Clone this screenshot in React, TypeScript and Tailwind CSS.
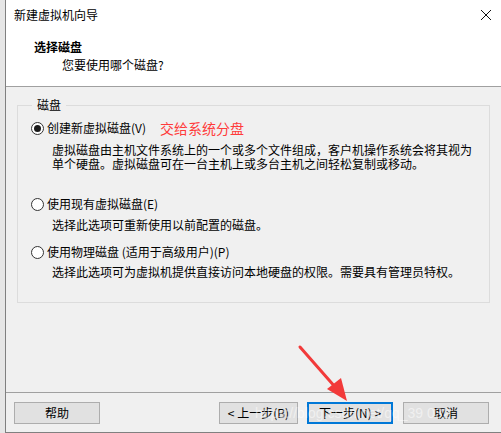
import React from "react"

function Radio({ checked }: { checked?: boolean }) {
  return (
    <span className="flex h-[13px] w-[13px] shrink-0 items-center justify-center rounded-full border border-[#333333] bg-white">
      {checked && <span className="h-[7px] w-[7px] rounded-full bg-[#1a1a1a]" />}
    </span>
  )
}

function Btn({ label, w, primary }: { label: string; w: string; primary?: boolean }) {
  return (
    <button
      className={`flex h-[22px] items-center justify-center bg-[#e1e1e1] text-[12px] text-black ${w} ${
        primary ? "border-2 border-[#0078d7]" : "border border-[#adadad]"
      }`}
    >
      {label}
    </button>
  )
}

export default function App() {
  return (
    <div
      className="relative h-[433px] w-[501px] overflow-hidden bg-[#e6e6e6] pl-[5px]"
      style={{ fontFamily: '"Noto Sans CJK SC", "Noto Sans", sans-serif' }}
    >
      <div className="flex h-full flex-col border-l border-b border-[#808080] bg-[#f0f0f0]">
        {/* Title bar */}
        <div className="flex h-[30px] items-center justify-between bg-white pl-[8px] pr-[8px] text-[12px] text-black">
          <span>新建虚拟机向导</span>
          <svg width="12" height="12" viewBox="0 0 12 12" className="mr-[1px]">
            <path d="M1 1 L11 11 M11 1 L1 11" stroke="#111" strokeWidth="1" />
          </svg>
        </div>

        {/* Header */}
        <div className="h-[57px] border-b border-[#a0a0a0] bg-white text-[12px] leading-[16px] text-black">
          <div className="pl-[28px] pt-[9px] font-bold">选择磁盘</div>
          <div className="pl-[56px] pt-[2px]">您要使用哪个磁盘?</div>
        </div>

        {/* Body */}
        <div className="flex-1 px-[11px] pt-[10px]">
          <fieldset className="border border-[#dcdcdc] pb-[23px] pl-[13px] pr-[10px] text-[12px] leading-[16px] text-black">
            <legend className="ml-[1px] px-[5px]">磁盘</legend>

            <div className="mt-[7px] flex items-center gap-[3px]">
              <Radio checked />
              <span>创建新虚拟磁盘(V)</span>
              <span className="ml-[11px] text-[14px] text-[#ff3b3b]">交给系统分盘</span>
            </div>
            <div className="mt-[7px] pl-[21px] leading-[14px]">
              虚拟磁盘由主机文件系统上的一个或多个文件组成，客户机操作系统会将其视为
              <br />
              单个硬盘。虚拟磁盘可在一台主机上或多台主机之间轻松复制或移动。
            </div>

            <div className="mt-[25px] flex items-center gap-[3px]">
              <Radio />
              <span>使用现有虚拟磁盘(E)</span>
            </div>
            <div className="mt-[6px] pl-[21px] leading-[14px]">选择此选项可重新使用以前配置的磁盘。</div>

            <div className="mt-[12px] flex items-center gap-[3px]">
              <Radio />
              <span>使用物理磁盘 (适用于高级用户)(P)</span>
            </div>
            <div className="mt-[5px] pl-[21px] leading-[14px]">
              选择此选项可为虚拟机提供直接访问本地硬盘的权限。需要具有管理员特权。
            </div>
          </fieldset>
        </div>

        {/* Footer */}
        <div className="flex h-[40px] items-start border-t border-[#a0a0a0] pt-[9px] pl-[8px]">
          <Btn label="帮助" w="w-[86px]" />
          <div className="ml-[119px] flex gap-[10px]">
            <Btn label="< 上一步(B)" w="w-[79px]" />
            <div className="-ml-[1px] flex gap-[10px]">
              <Btn label="下一步(N) >" w="w-[86px]" primary />
              <Btn label="取消" w="w-[86px]" />
            </div>
          </div>
        </div>
      </div>

      {/* watermark */}
      <div
        className="pointer-events-none absolute left-[255px] top-[403px] whitespace-nowrap text-[14px] text-white/50"
        style={{ fontFamily: '"Liberation Sans", sans-serif' }}
      >
        https://blog.csdn.net/qq_39 032
      </div>

      {/* annotation arrow */}
      <svg className="pointer-events-none absolute left-0 top-0" width="501" height="433">
        <path d="M300 347 L336 388" stroke="#f23a3a" strokeWidth="3" strokeLinecap="round" />
        <path d="M347 401 L327 389 L341 378 Z" fill="#f23a3a" />
      </svg>
    </div>
  )
}
